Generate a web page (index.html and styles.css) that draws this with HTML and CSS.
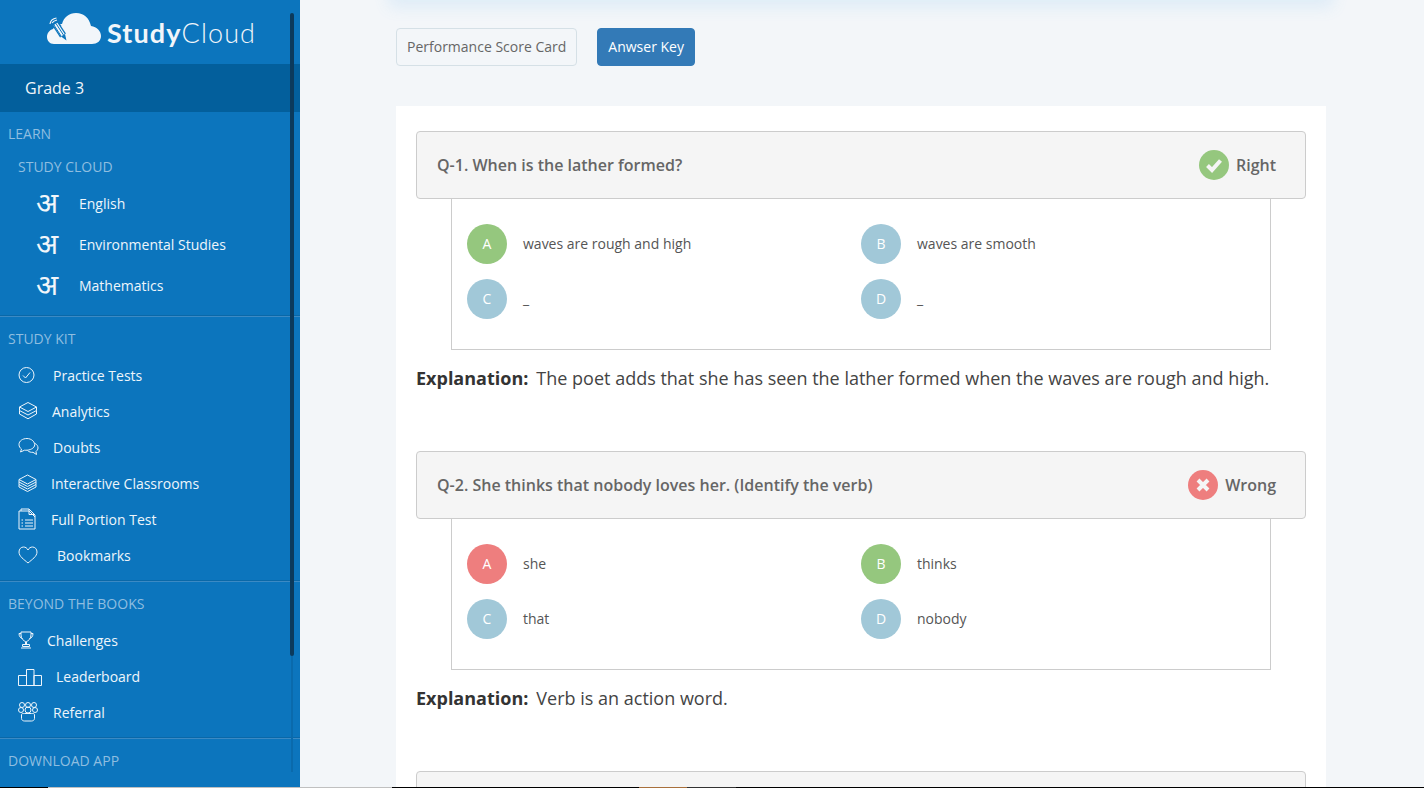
FILE: index.html
```html
<!DOCTYPE html>
<html lang="en">
<head>
<meta charset="utf-8">
<title>StudyCloud</title>
<link rel="stylesheet" href="styles.css">
</head>
<body>
<div class="app">
  <aside class="sidebar">
    <div class="scrollbar"></div>
    <div class="logo">
      <svg class="logo-cloud" width="56" height="34" viewBox="0 0 56 34"><path fill="#f2f6fa" d="M8 32C3.500 32 1 28.500 1 25C1 21 3.500 18 7 17C9 13 12 11.500 16 12C18 5 23 1 30 1C38 1 43 6 45 14C51 15 55 19 55 24C55 29 51 32 46 32Z"/><path fill="none" stroke="#0c75bd" stroke-width="7" d="M9.500 12L17 23.500"/><path fill="none" stroke="#f2f6fa" stroke-width="4.500" d="M9.500 12L17 23.500"/><path fill="none" stroke="#0c75bd" stroke-width="1" d="M10 11.500L17.500 23M8 13L15 24M12 10L15 14"/><path fill="#0c75bd" d="M15 24.500L19 22L20.500 28.500Z"/><path fill="none" stroke="#f2f6fa" stroke-width="1.200" d="M4 12C4.500 8.500 7 6.500 10.500 6M6 11C7 9.500 8.500 8.500 11 8"/></svg>
      <span class="logo-text"><b>Study</b>Cloud</span>
    </div>
    <div class="grade">Grade 3</div>
    <div class="section first-section">
      <div class="section-title">LEARN</div>
      <div class="sub-title">STUDY CLOUD</div>
      <a class="subject"><span class="glyph">अ</span><span>English</span></a>
      <a class="subject"><span class="glyph">अ</span><span>Environmental Studies</span></a>
      <a class="subject"><span class="glyph">अ</span><span>Mathematics</span></a>
    </div>
    <div class="section kit">
      <div class="section-title">STUDY KIT</div>
      <a class="item gap-practice"><svg width="18" height="18" viewBox="0 0 18 18" class="ico"><circle cx="8.500" cy="9" r="7.500"/><path d="M5 9.500L7.500 12L12 6.500"/></svg><span>Practice Tests</span></a>
      <a class="item gap-analytics"><svg width="20" height="20" viewBox="0 0 20 20" class="ico"><path d="M10 1.500L18.500 6L10 10.500L1.500 6Z"/><path d="M1.500 6V9.500L10 14L18.500 9.500V6"/><path d="M1.500 9.500V13L10 17.800L18.500 13V9.500"/></svg><span>Analytics</span></a>
      <a class="item gap-doubts"><svg width="21" height="20" viewBox="0 0 21 20" class="ico"><path d="M9 1.500C4.500 1.500 1 4 1 7.500C1 9.500 2 11 3.500 12L2.500 15L6.500 13.200C10 13.500 15 12.500 16.500 9C17.500 5 13.500 1.500 9 1.500Z"/><path d="M17 6.500C19 7.500 20 9 20 11C20 12.500 19 13.500 18 14.500L18.500 17.500L15 15.300C13 15.500 11 15 9.500 13.500"/></svg><span>Doubts</span></a>
      <a class="item gap-classrooms"><svg width="19" height="19" viewBox="0 0 19 19" class="ico"><path d="M9.500 1L18 5.500L9.500 10L1 5.500Z"/><path d="M1 5.500V8L9.500 12.500L18 8V5.500"/><path d="M1 8V10.500L9.500 15L18 10.500V8"/><path d="M1 10.500V13L9.500 17.500L18 13V10.500"/></svg><span>Interactive Classrooms</span></a>
      <a class="item gap-full"><svg width="18" height="22" viewBox="0 0 18 22" class="ico"><path d="M1 3H3V1H11L17 7V21H1Z"/><path d="M3 3H11L17 9M11 1V6.500H17"/><path d="M3.500 12H5M7 12H15M3.500 15H5M7 15H15M3.500 18H5M7 18H15"/></svg><span>Full Portion Test</span></a>
      <a class="item gap-bookmarks"><svg width="20" height="18" viewBox="0 0 20 18" class="ico"><path d="M10 17C6 13.500 1 10.500 1 6C1 3 3 1 5.500 1C7.500 1 9 2 10 4C11 2 12.500 1 14.500 1C17 1 19 3 19 6C19 10.500 14 13.500 10 17Z"/></svg><span>Bookmarks</span></a>
    </div>
    <div class="section beyond">
      <div class="section-title">BEYOND THE BOOKS</div>
      <a class="item gap-challenges"><svg width="16" height="18" viewBox="0 0 16 18" class="ico"><path d="M3 1H13V4C13 8 10 10 8.500 10.500V13H7.500V10.500C6 10 3 8 3 4Z"/><path d="M3 2.500H1C1 5.500 2.500 7 4.500 7.500M13 2.500H15C15 5.500 13.500 7 11.500 7.500"/><path d="M4.500 13.500H11.500V15.500H4.500Z"/><path d="M3 17H13"/></svg><span>Challenges</span></a>
      <a class="item gap-leader"><svg width="24" height="20" viewBox="0 0 24 20" class="ico"><path d="M0.500 19.500V9.500H8.500V19.500ZM8.500 19.500V3.500H16V19.500ZM16 19.500V9.500H23.500V19.500Z"/></svg><span>Leaderboard</span></a>
      <a class="item gap-referral"><svg width="20" height="20" viewBox="0 0 20 20" class="ico"><circle cx="4" cy="3" r="2.500"/><circle cx="10" cy="3" r="2.500"/><circle cx="16" cy="3" r="2.500"/><circle cx="3" cy="8" r="2.500"/><circle cx="17" cy="8" r="2.500"/><circle cx="10" cy="8" r="3"/><path d="M3.500 12.500C3.500 11.500 5 11.500 6.500 11.500H13.500C15 11.500 16.500 11.500 16.500 12.500V16.500C16.500 18 15 19 13.500 19H6.500C5 19 3.500 18 3.500 16.500Z"/></svg><span>Referral</span></a>
    </div>
    <div class="section download">
      <div class="section-title">DOWNLOAD APP</div>
    </div>
  </aside>
  <main class="main">
    <div class="top-glow"></div>
    <div class="tabs">
      <button class="tab">Performance Score Card</button>
      <button class="tab active">Anwser Key</button>
    </div>
    <section class="paper">
      <article class="question">
        <header class="q-head">
          <span class="q-text">Q-1. When is the lather formed?</span>
          <span class="verdict"><svg width="30" height="30" viewBox="0 0 30 30"><circle cx="15" cy="15" r="15" fill="#95c77e"/><path d="M8.500 15.500L13 20L21.500 10.500" fill="none" stroke="#f5f5f5" stroke-width="4"/></svg>Right</span>
        </header>
        <div class="options">
          <div class="option"><span class="bubble correct">A</span><span>waves are rough and high</span></div>
          <div class="option"><span class="bubble">B</span><span>waves are smooth</span></div>
          <div class="option"><span class="bubble">C</span><span>_</span></div>
          <div class="option"><span class="bubble">D</span><span>_</span></div>
        </div>
        <p class="explain"><b>Explanation:</b>The poet adds that she has seen the lather formed when the waves are rough and high.</p>
      </article>
      <article class="question">
        <header class="q-head">
          <span class="q-text">Q-2. She thinks that nobody loves her. (Identify the verb)</span>
          <span class="verdict"><svg width="30" height="30" viewBox="0 0 30 30"><circle cx="15" cy="15" r="15" fill="#ee7e7e"/><path d="M10 10L20 20M20 10L10 20" fill="none" stroke="#f5f5f5" stroke-width="4"/></svg>Wrong</span>
        </header>
        <div class="options">
          <div class="option"><span class="bubble wrong">A</span><span>she</span></div>
          <div class="option"><span class="bubble correct">B</span><span>thinks</span></div>
          <div class="option"><span class="bubble">C</span><span>that</span></div>
          <div class="option"><span class="bubble">D</span><span>nobody</span></div>
        </div>
        <p class="explain"><b>Explanation:</b>Verb is an action word.</p>
      </article>
      <article class="question">
        <header class="q-head"></header>
      </article>
    </section>
  </main>
</div>
<div class="taskbar"><i class="tb-a"></i><i class="tb-b"></i><i class="tb-c"></i><i class="tb-d"></i><i class="tb-e"></i></div>
</body>
</html>
```
FILE: styles.css
```css
* { box-sizing: border-box; }
html, body { margin: 0; height: 788px; overflow: hidden; }
body { font-family: "Open Sans", sans-serif; color: #555; background: #f3f6f9; }
.app { display: flex; height: 788px; overflow: hidden; }

.sidebar { position: relative; width: 300px; flex: none; height: 788px; background: #0c75bd; color: #fff; overflow: hidden; }
.scrollbar { position: absolute; left: 290px; top: 13px; width: 4px; height: 643px; background: #0c3a5c; border-radius: 2px; z-index: 2; }
.sidebar::after { content: ""; position: absolute; left: 291px; top: 656px; width: 2px; height: 116px; background: #0a6aac; }
.logo { height: 64px; padding: 12px 0 0 46px; display: flex; align-items: flex-start; gap: 5px; }
.logo-cloud { flex: none; }
.logo-text { font-family: "Lato", "Open Sans", sans-serif; font-size: 27px; line-height: 40px; font-weight: 300; letter-spacing: 1.1px; margin-top: 1px; color: #f2f6fa; }
.logo-text b { font-weight: 700; }
.grade { height: 48px; background: #035f9c; font-size: 16px; line-height: 48px; padding-left: 25px; color: #f2f6fa; }

.section { border-bottom: 1px solid #3c8ac4; box-shadow: inset 0 -1px 0 #0a68a8; }
.first-section { height: 205px; padding-top: 12px; }
.kit { height: 265px; padding-top: 12px; }
.beyond { height: 157px; padding-top: 12px; }
.download { border-bottom: 0; box-shadow: none; padding-top: 12px; }
.section-title { font-size: 14px; line-height: 20px; padding-left: 8px; color: #8fbee0; }
.sub-title { font-size: 14px; line-height: 20px; padding-left: 18px; color: #8fbee0; margin-top: 13px; margin-bottom: 6px; }
a { display: flex; align-items: center; color: #eef5fb; font-size: 14px; }
.subject { height: 41px; padding-left: 36px; }
.glyph { width: 43px; flex: none; font-family: "DejaVu Sans", "Noto Sans", sans-serif; font-size: 29px; line-height: 41px; color: #f2f6fa; }
.kit .item:first-of-type { margin-top: 8px; }
.item { height: 36px; padding-left: 18px; }
.beyond .item:first-of-type { margin-top: 8px; }
.ico { flex: none; fill: none; stroke: #eef5fb; stroke-width: 1; }
.gap-practice .ico { margin-right: 17px; }
.gap-analytics .ico { margin-right: 14px; }
.gap-doubts .ico { margin-right: 14px; }
.gap-classrooms .ico { margin-right: 14px; }
.gap-full .ico { margin-right: 15px; }
.gap-bookmarks .ico { margin-right: 19px; }
.gap-challenges .ico { margin-right: 13px; }
.gap-leader .ico { margin-right: 14px; }
.gap-referral .ico { margin-right: 15px; }

.main { position: relative; flex: 1; min-width: 0; height: 788px; overflow: hidden; padding: 28px 0 0 96px; }
.top-glow { position: absolute; left: 96px; right: 98px; top: -14px; height: 14px; box-shadow: 0 0 16px 7px rgba(90,175,240,.14); }
.tabs { display: flex; gap: 20px; height: 38px; }
.tab { height: 38px; padding: 0 10px 2px; border: 1px solid #d5e0e6; border-radius: 4px; background: transparent; color: #666; font: 14px "Open Sans", sans-serif; }
.tab.active { background: #337ab7; border-color: #337ab7; color: #fff; }

.paper { width: 930px; height: 682px; overflow: hidden; margin-top: 40px; background: #fff; padding: 25px 20px 0; }
.question { height: 320px; }
.q-head { height: 68px; border: 1px solid #ccc; border-radius: 4px; background: #f5f5f5; display: flex; align-items: center; justify-content: space-between; padding: 0 29px 0 20px; font-size: 16px; font-weight: 600; color: #666; }
.verdict { display: flex; align-items: center; gap: 7px; font-size: 16px; }
.options { width: 820px; height: 151px; margin-left: 35px; border: 1px solid #ccc; border-top: 0; display: grid; grid-template-columns: 394px 1fr; grid-auto-rows: 55px; padding: 25px 0 0 15px; font-size: 14px; color: #555; }
.option { display: flex; align-items: flex-start; gap: 16px; line-height: 40px; height: 40px; }
.bubble { width: 40px; height: 40px; border-radius: 50%; background: #a1c8d8; color: #fff; text-align: center; flex: none; }
.bubble.correct { background: #95c77e; }
.bubble.wrong { background: #ee7e7e; }
.explain { margin: 16px 0 0; font-size: 18px; line-height: 24px; color: #444; }
.explain b { font-weight: 700; color: #333; margin-right: 8px; }

.taskbar { position: fixed; left: 0; right: 0; top: 787px; height: 1px; display: flex; background: #000; }
.taskbar i { display: block; height: 1px; }
.tb-a { width: 48px; background: #000; }
.tb-b { width: 344px; background: #c0c0c0; }
.tb-c { width: 247px; background: #000; }
.tb-d { width: 48px; background: #a8703c; }
.tb-e { width: 49px; background: #333; }
```
